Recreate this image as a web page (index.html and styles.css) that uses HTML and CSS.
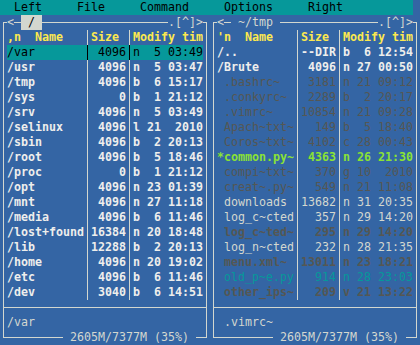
FILE: index.html
```html
<!DOCTYPE html>
<html lang="en">
<head>
  <meta charset="UTF-8">
  <meta name="viewport" content="width=device-width, initial-scale=1.0">
  <title>Midnight Commander</title>
  <link rel="stylesheet" href="styles.css">
</head>
<body>
  <div class="screen">
    <div class="menubar">
      <span>Left</span>
      <span>File</span>
      <span>Command</span>
      <span>Options</span>
      <span>Right</span>
    </div>

    <div class="panels">
      <!-- left panel (active) -->
      <section class="panel">
        <div class="frame">
          <div class="title">
            <span class="back">&lt;</span>
            <span class="path active"> / </span>
            <span class="controls">.[^]&gt;</span>
          </div>
          <div class="row head"><span class="name">,n  Name</span><span class="size">Size</span><span class="time">Modify tim</span></div>
          <div class="row current"><span class="name">/var</span><span class="size">4096</span><span class="time">n  5 03:49</span></div>
          <div class="row dir"><span class="name">/usr</span><span class="size">4096</span><span class="time">n  5 03:47</span></div>
          <div class="row dir"><span class="name">/tmp</span><span class="size">4096</span><span class="time">b  6 15:17</span></div>
          <div class="row dir"><span class="name">/sys</span><span class="size">0</span><span class="time">b  1 21:12</span></div>
          <div class="row dir"><span class="name">/srv</span><span class="size">4096</span><span class="time">n  5 03:49</span></div>
          <div class="row dir"><span class="name">/selinux</span><span class="size">4096</span><span class="time">l 21  2010</span></div>
          <div class="row dir"><span class="name">/sbin</span><span class="size">4096</span><span class="time">b  2 20:13</span></div>
          <div class="row dir"><span class="name">/root</span><span class="size">4096</span><span class="time">b  5 18:46</span></div>
          <div class="row dir"><span class="name">/proc</span><span class="size">0</span><span class="time">b  1 21:12</span></div>
          <div class="row dir"><span class="name">/opt</span><span class="size">4096</span><span class="time">n 23 01:39</span></div>
          <div class="row dir"><span class="name">/mnt</span><span class="size">4096</span><span class="time">n 27 11:18</span></div>
          <div class="row dir"><span class="name">/media</span><span class="size">4096</span><span class="time">b  6 11:46</span></div>
          <div class="row dir"><span class="name">/lost+found</span><span class="size">16384</span><span class="time">n 20 18:48</span></div>
          <div class="row dir"><span class="name">/lib</span><span class="size">12288</span><span class="time">b  2 20:13</span></div>
          <div class="row dir"><span class="name">/home</span><span class="size">4096</span><span class="time">n 20 19:02</span></div>
          <div class="row dir"><span class="name">/etc</span><span class="size">4096</span><span class="time">b  6 11:46</span></div>
          <div class="row dir"><span class="name">/dev</span><span class="size">3040</span><span class="time">b  6 14:51</span></div>
          <div class="divider"></div>
          <div class="status">/var</div>
          <div class="footer"><span> 2605M/7377M (35%) </span></div>
        </div>
      </section>

      <!-- right panel -->
      <section class="panel">
        <div class="frame">
          <div class="title">
            <span class="back">&lt;</span>
            <span class="path"> ~/tmp </span>
            <span class="controls">.[^]&gt;</span>
          </div>
          <div class="row head"><span class="name">'n  Name</span><span class="size">Size</span><span class="time">Modify tim</span></div>
          <div class="row dir"><span class="name">/..</span><span class="size">--DIR</span><span class="time">b  6 12:54</span></div>
          <div class="row dir"><span class="name">/Brute</span><span class="size">4096</span><span class="time">n 27 00:50</span></div>
          <div class="row backup"><span class="name"> .bashrc~</span><span class="size">3181</span><span class="time">n 21 09:12</span></div>
          <div class="row backup"><span class="name"> .conkyrc~</span><span class="size">2289</span><span class="time">b  2 20:17</span></div>
          <div class="row backup"><span class="name"> .vimrc~</span><span class="size">10854</span><span class="time">n 21 09:28</span></div>
          <div class="row backup"><span class="name"> Apach~txt~</span><span class="size">149</span><span class="time">b  5 18:40</span></div>
          <div class="row backup"><span class="name"> Coros~txt~</span><span class="size">4102</span><span class="time">c 28 00:43</span></div>
          <div class="row exec"><span class="name">*common.py~</span><span class="size">4363</span><span class="time">n 26 21:30</span></div>
          <div class="row backup"><span class="name"> compi~txt~</span><span class="size">370</span><span class="time">g 10  2010</span></div>
          <div class="row backup"><span class="name"> creat~.py~</span><span class="size">549</span><span class="time">n 21 11:08</span></div>
          <div class="row"><span class="name"> downloads</span><span class="size">13682</span><span class="time">n 31 20:35</span></div>
          <div class="row"><span class="name"> log_c~cted</span><span class="size">357</span><span class="time">n 29 14:20</span></div>
          <div class="row backup strong"><span class="name"> log_c~ted~</span><span class="size">295</span><span class="time">n 29 14:20</span></div>
          <div class="row"><span class="name"> log_n~cted</span><span class="size">232</span><span class="time">n 28 21:35</span></div>
          <div class="row backup strong"><span class="name"> menu.xml~</span><span class="size">13011</span><span class="time">n 23 18:21</span></div>
          <div class="row source"><span class="name"> old_p~e.py</span><span class="size">914</span><span class="time">n 28 23:03</span></div>
          <div class="row backup strong"><span class="name"> other_ips~</span><span class="size">209</span><span class="time">v 21 13:22</span></div>
          <div class="divider"></div>
          <div class="status"> .vimrc~</div>
          <div class="footer"><span> 2605M/7377M (35%) </span></div>
        </div>
      </section>
    </div>
  </div>
</body>
</html>
```

FILE: styles.css
```css
body {
  margin: 0;
  background-color: #3465a4;
  color: #d3d7cf;
  font-family: 'DejaVu Sans Mono', monospace;
  font-size: 11.63px;
  line-height: 15px;
}

.screen {
  width: 420px;
  height: 345px;
  overflow: hidden;
}

.menubar {
  display: flex;
  gap: 35px;
  width: 413px;
  height: 15px;
  padding-left: 14px;
  box-sizing: border-box;
  background-color: #06989a;
  color: #000;
}

.panels {
  display: flex;
}

.panel {
  width: 210px;
  height: 330px;
  padding: 7px 3px 0;
  box-sizing: border-box;
}

.frame {
  border: 1px solid #d3d7cf;
  padding: 0 3px;
}

/* title sits on top of the frame's upper border */
.title {
  display: flex;
  height: 15px;
  margin-top: -8px;
}

.title span {
  white-space: pre;
  background-color: #3465a4;
}

.title .back {
  margin-right: 7px;
}

.title .path.active {
  background-color: #d3d7cf;
  color: #000;
}

.title .controls {
  margin-left: auto;
}

.row {
  display: grid;
  grid-template-columns: 81px 42px 73px;
  height: 15px;
}

.row span {
  white-space: pre;
  overflow: hidden;
  box-sizing: border-box;
}

.row .name {
  padding-right: 3px;
  border-right: 1px solid #d3d7cf;
}

.row .size {
  padding: 0 3px;
  border-right: 1px solid #d3d7cf;
  text-align: right;
}

.row .time {
  padding-left: 3px;
}

.row.head span {
  color: #fce94f;
  font-weight: bold;
}

.row.head .size {
  text-align: left;
}

.row.current {
  background-color: #06989a;
  color: #000;
}

.row.current span {
  border-color: #000;
}

.row.dir {
  color: #eeeeec;
  font-weight: bold;
}

.row.backup {
  color: #555753;
}

.row.strong {
  font-weight: bold;
}

.row.exec {
  color: #8ae234;
  font-weight: bold;
}

.row.source {
  color: #06989a;
}

.divider {
  margin: 7px -3px 0;
  border-top: 1px solid #d3d7cf;
}

.status {
  height: 15px;
  margin-top: 7px;
  white-space: pre;
}

.footer {
  display: flex;
  justify-content: flex-end;
  height: 15px;
  margin-bottom: -8px;
  padding-right: 7px;
}

.footer span {
  white-space: pre;
  background-color: #3465a4;
}
```
